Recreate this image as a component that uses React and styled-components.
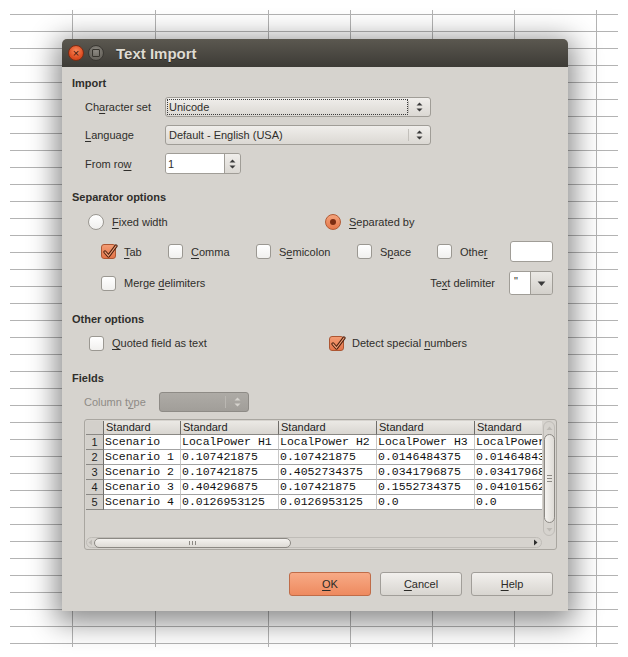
import React from "react";
import styled, { createGlobalStyle } from "styled-components";

const GRID = "#b3b3b3";
const columnLines = [72, 155, 268, 350, 432, 514, 596];

const GlobalStyle = createGlobalStyle`
  html, body {
    margin: 0;
    padding: 0;
    background: #fff;
  }
  body {
    font-family: "Liberation Sans", Arial, sans-serif;
    font-size: 11px;
    color: #2f2e2b;
  }
`;

const Page = styled.div`
  position: relative;
  width: 628px;
  height: 657px;
  box-sizing: border-box;
  padding: 39px 0 0 62px;
  overflow: hidden;
  background-color: #fff;
  background-image: ${columnLines.map(() => `linear-gradient(${GRID}, ${GRID})`).join(", ")},
    repeating-linear-gradient(to bottom, ${GRID} 0 1px, transparent 1px 17px);
  background-size: ${columnLines.map(() => "1px 637px").join(", ")}, 608px 630px;
  background-position: ${columnLines.map((x) => `${x}px 10px`).join(", ")}, 10px 14px;
  background-repeat: no-repeat;
`;

const Dialog = styled.div`
  position: relative;
  width: 506px;
  background: #d6d3ce;
  border-radius: 5px 5px 0 0;
  box-shadow: 0 6px 28px 6px rgba(0, 0, 0, 0.45);
`;

const TitleBar = styled.div`
  height: 28px;
  display: flex;
  align-items: center;
  padding-left: 6px;
  background: linear-gradient(#5b5850, #3d3b36);
  border-radius: 5px 5px 0 0;
`;

const WinButton = styled.span`
  width: 16px;
  height: 16px;
  box-sizing: border-box;
  border-radius: 50%;
  margin-right: 4px;
  display: flex;
  align-items: center;
  justify-content: center;
  border: 1px solid ${(p) => (p.$close ? "#7d2c14" : "#3a3833")};
  background: ${(p) =>
    p.$close
      ? "radial-gradient(circle at 50% 35%, #f78a5e, #df4f23 60%, #c23f19)"
      : "radial-gradient(circle at 50% 35%, #8d8a83, #6c6962 60%, #5d5a54)"};
  color: #3b1408;
  font-size: 11px;
  line-height: 1;
`;

const MaxSquare = styled.span`
  width: 6px;
  height: 6px;
  border: 1px solid #37352f;
  border-radius: 1px;
`;

const Title = styled.span`
  margin-left: 8px;
  font-weight: bold;
  font-size: 15px;
  color: #dfdbd2;
  text-shadow: 0 1px 0 rgba(0, 0, 0, 0.4);
`;

const Body = styled.div`
  display: flex;
  flex-direction: column;
  padding: 8px 15px 15px 10px;
`;

const Heading = styled.div`
  font-weight: bold;
  line-height: 16px;
  height: 16px;
  margin-top: ${(p) => p.$gap || 0}px;
`;

const U = styled.span`
  text-decoration: underline;
  text-underline-offset: 2px;
`;

const FormGrid = styled.div`
  display: grid;
  grid-template-columns: 80px auto;
  grid-template-rows: 20px 20px 21px;
  row-gap: 8px;
  align-items: center;
  justify-items: start;
  margin: 6px 0 0 13px;
`;

const Combo = styled.div`
  display: flex;
  align-items: stretch;
  width: ${(p) => p.$w}px;
  height: ${(p) => p.$h || 20}px;
  box-sizing: border-box;
  border: 1px solid ${(p) => (p.$disabled ? "#8e8b86" : "#a09d97")};
  border-radius: 3px;
  background: ${(p) =>
    p.$disabled ? "linear-gradient(#aeaba6, #a19e99)" : "linear-gradient(#f0eeeb, #dbd8d3)"};
  overflow: hidden;
`;

const ComboText = styled.div`
  flex: 1;
  display: flex;
  align-items: center;
  padding-left: 2px;
  margin: 1px 0 1px 1px;
  outline: ${(p) => (p.$focus ? "1px dotted #3a3a3a" : "none")};
  outline-offset: -1px;
  white-space: nowrap;
`;

const ComboArrows = styled.div`
  width: ${(p) => p.$w || 20}px;
  display: flex;
  align-items: center;
  justify-content: center;
  border-left: 1px solid ${(p) => (p.$disabled ? "#bab7b2" : "#c3c0bb")};
  margin: 3px 0;
`;

const Spin = styled.div`
  display: flex;
  width: 76px;
  height: 21px;
  box-sizing: border-box;
  border: 1px solid #a09d97;
  border-radius: 3px;
  overflow: hidden;
`;

const SpinInput = styled.div`
  flex: 1;
  background: #fff;
  display: flex;
  align-items: center;
  padding-left: 2px;
`;

const SpinButton = styled.div`
  width: 15px;
  display: flex;
  align-items: center;
  justify-content: center;
  border-left: 1px solid #a09d97;
  background: linear-gradient(#f0eeeb, #dbd8d3);
`;

const RadioRow = styled.div`
  display: grid;
  grid-template-columns: 237px auto;
  height: 16px;
  margin: 9px 0 0 16px;
`;

const Option = styled.label`
  display: inline-flex;
  align-items: center;
  gap: 8px;
  white-space: nowrap;
`;

const RadioDot = styled.span`
  width: 16px;
  height: 16px;
  box-sizing: border-box;
  border-radius: 50%;
  flex: none;
  display: flex;
  align-items: center;
  justify-content: center;
  border: 1px solid ${(p) => (p.$on ? "#b35a34" : "#9b9892")};
  background: ${(p) =>
    p.$on ? "linear-gradient(#f4a37c, #e5784b)" : "linear-gradient(#ffffff, #f0efed)"};
  &::after {
    content: "";
    display: ${(p) => (p.$on ? "block" : "none")};
    width: 6px;
    height: 6px;
    border-radius: 50%;
    background: #7c2d12;
  }
`;

const Box = styled.span`
  position: relative;
  width: 15px;
  height: 15px;
  box-sizing: border-box;
  flex: none;
  border: 1px solid ${(p) => (p.$on ? "#ad5632" : "#9b9892")};
  border-radius: 3px;
  background: ${(p) =>
    p.$on ? "linear-gradient(#f39c74, #e4754a)" : "linear-gradient(#ffffff, #f1f0ee)"};
`;

const Tick = styled.svg`
  position: absolute;
  left: 0;
  top: -2px;
`;

const CheckRow = styled.div`
  display: grid;
  grid-template-columns: 67px 88px 101px 80px 73px 43px;
  align-items: center;
  height: 21px;
  margin: 11px 0 0 29px;
`;

const TextField = styled.div`
  width: 43px;
  height: 21px;
  box-sizing: border-box;
  border: 1px solid #a09d97;
  border-radius: 3px;
  background: #fff;
`;

const MergeRow = styled.div`
  display: flex;
  align-items: center;
  height: 24px;
  margin: 9px 0 0 29px;
`;

const Delimiter = styled.div`
  margin-left: auto;
  display: flex;
  align-items: center;
  gap: 14px;
`;

const DelimCombo = styled.div`
  display: flex;
  width: 44px;
  height: 24px;
  box-sizing: border-box;
  border: 1px solid #a09d97;
  border-radius: 3px;
  overflow: hidden;
`;

const DelimText = styled.div`
  flex: 1;
  background: #fff;
  padding: 3px 0 0 4px;
  font-size: 11px;
`;

const DelimButton = styled.div`
  width: 21px;
  display: flex;
  align-items: center;
  justify-content: center;
  border-left: 1px solid #a09d97;
  background: linear-gradient(#ebe9e5, #d3d0cb);
`;

const OtherRow = styled.div`
  display: grid;
  grid-template-columns: 240px auto;
  height: 16px;
  align-items: center;
  margin: 8px 0 0 17px;
`;

const TypeRow = styled.div`
  display: flex;
  align-items: center;
  height: 20px;
  margin: 6px 0 0 12px;
`;

const Dim = styled.span`
  width: 75px;
  color: #8e8b86;
`;

const Frame = styled.div`
  display: grid;
  grid-template-columns: 456px 13px;
  grid-template-rows: 115px 12px;
  width: 473px;
  height: 131px;
  box-sizing: border-box;
  padding: 1px;
  margin: 7px 0 0 12px;
  border: 1px solid #a9a6a0;
  border-radius: 3px;
  background: #d6d3ce;
`;

const Viewport = styled.div`
  overflow: hidden;
`;

const Sheet = styled.div`
  display: grid;
  grid-template-columns: 18px 77px 98px 98px 98px 98px;
  grid-template-rows: 14px repeat(5, 15px);
`;

const HeadCell = styled.div`
  box-sizing: border-box;
  padding-left: 2px;
  line-height: 13px;
  white-space: nowrap;
  overflow: hidden;
  color: #1e1e1e;
  background: linear-gradient(#ebe9e5, #d9d6d1);
  border-right: 1px solid #6f6d69;
  border-bottom: 1px solid #8a8884;
`;

const RowHead = styled.div`
  box-sizing: border-box;
  text-align: center;
  line-height: 14px;
  color: #1e1e1e;
  background: #d3d0cb;
  border-right: 1px solid #6f6d69;
  border-bottom: 1px solid #8a8884;
`;

const Cell = styled.div`
  box-sizing: border-box;
  padding-left: 1px;
  background: #fff;
  font-family: "Liberation Mono", "Courier New", monospace;
  font-size: 11.5px;
  line-height: 14px;
  white-space: pre;
  overflow: hidden;
  color: #111;
  border-right: 1px solid #c8c8c8;
  border-bottom: 1px solid #a3a3a3;
`;

const VScroll = styled.div`
  display: flex;
  flex-direction: column;
  align-items: center;
  box-sizing: border-box;
  border: 1px solid #bfbcb7;
  border-radius: 6px;
  margin-left: 1px;
`;

const ScrollArrow = styled.div`
  height: ${(p) => p.$h}px;
  margin-left: ${(p) => (p.$end ? "auto" : "0")};
  padding-right: ${(p) => (p.$end ? "2px" : "0")};
  display: flex;
  align-items: center;
  justify-content: center;
  flex: none;
`;

const VThumb = styled.div`
  flex: 1;
  width: 11px;
  box-sizing: border-box;
  border: 1px solid #8c8984;
  border-radius: 6px;
  background: linear-gradient(to right, #f4f2ef, #dedbd6);
  display: flex;
  align-items: center;
  justify-content: center;
`;

const HScroll = styled.div`
  display: flex;
  align-items: center;
  box-sizing: border-box;
  border: 1px solid #bfbcb7;
  border-radius: 6px;
  margin-top: 1px;
`;

const HThumb = styled.div`
  width: 197px;
  height: 10px;
  box-sizing: border-box;
  border: 1px solid #8c8984;
  border-radius: 6px;
  background: linear-gradient(#f4f2ef, #dedbd6);
  display: flex;
  align-items: center;
  justify-content: center;
  gap: 2px;
`;

const Grip = styled.span`
  width: ${(p) => (p.$v ? 5 : 1)}px;
  height: ${(p) => (p.$v ? 1 : 4)}px;
  background: #8c8984;
`;

const GripCol = styled.div`
  display: flex;
  flex-direction: column;
  gap: 2px;
`;

const ButtonRow = styled.div`
  display: flex;
  justify-content: flex-end;
  gap: 9px;
  margin-top: 22px;
`;

const Button = styled.button`
  width: 82px;
  height: 24px;
  box-sizing: border-box;
  padding: 0;
  font-family: "Liberation Sans", Arial, sans-serif;
  font-size: 11px;
  color: #2b2a27;
  border-radius: 3px;
  border: 1px solid ${(p) => (p.$primary ? "#c06c48" : "#a19e99")};
  background: ${(p) =>
    p.$primary ? "linear-gradient(#f7aa86, #ee8a5f)" : "linear-gradient(#f2f0ed, #d8d5d0)"};
`;

const UpDown = ({ color = "#3a3a3a" }) => (
  <svg width="7" height="12" viewBox="0 0 7 12">
    <path d="M3.5 1.5 L6.5 4.5 H0.5 Z M3.5 10.5 L6.5 7.5 H0.5 Z" fill={color} />
  </svg>
);

const Triangle = ({ dir, color = "#3a3a3a", size = 7 }) => {
  const d = {
    down: "M0.5 2 H6.5 L3.5 5.5 Z",
    up: "M0.5 5 H6.5 L3.5 1.5 Z",
    left: "M5 0.5 V6.5 L1.5 3.5 Z",
    right: "M2 0.5 V6.5 L5.5 3.5 Z",
  }[dir];
  return (
    <svg width={size} height={size} viewBox="0 0 7 7">
      <path d={d} fill={color} />
    </svg>
  );
};

const Check = ({ on, children }) => (
  <Option>
    <Box $on={on}>
      {on && (
        <Tick width="16" height="17" viewBox="0 0 16 17">
          <path d="M3 9 L6.5 13 L14 3" stroke="#4a1f0d" strokeWidth="3.2" fill="none" strokeLinejoin="round" strokeLinecap="round" />
          <path d="M3 9 L6.5 13 L14 3" stroke="#f2a07a" strokeWidth="1.2" fill="none" strokeLinejoin="round" strokeLinecap="round" />
        </Tick>
      )}
    </Box>
    <span>{children}</span>
  </Option>
);

const Radio = ({ on, children }) => (
  <Option>
    <RadioDot $on={on} />
    <span>{children}</span>
  </Option>
);

const headers = ["Standard", "Standard", "Standard", "Standard", "Standard"];
const rows = [
  ["Scenario", "LocalPower H1", "LocalPower H2", "LocalPower H3", "LocalPower H4"],
  ["Scenario 1", "0.107421875", "0.107421875", "0.0146484375", "0.0146484375"],
  ["Scenario 2", "0.107421875", "0.4052734375", "0.0341796875", "0.0341796875"],
  ["Scenario 3", "0.404296875", "0.107421875", "0.1552734375", "0.0410156250"],
  ["Scenario 4", "0.0126953125", "0.0126953125", "0.0", "0.0"],
];

export default function App() {
  return (
    <Page>
      <GlobalStyle />
      <Dialog>
        <TitleBar>
          <WinButton $close>×</WinButton>
          <WinButton>
            <MaxSquare />
          </WinButton>
          <Title>Text Import</Title>
        </TitleBar>
        <Body>
          <Heading>Import</Heading>
          <FormGrid>
            <span>
              Ch<U>a</U>racter set
            </span>
            <Combo $w={266}>
              <ComboText $focus>Unicode</ComboText>
              <ComboArrows $w={21}>
                <UpDown />
              </ComboArrows>
            </Combo>
            <span>
              <U>L</U>anguage
            </span>
            <Combo $w={266}>
              <ComboText>Default - English (USA)</ComboText>
              <ComboArrows $w={21}>
                <UpDown />
              </ComboArrows>
            </Combo>
            <span>
              From ro<U>w</U>
            </span>
            <Spin>
              <SpinInput>1</SpinInput>
              <SpinButton>
                <UpDown />
              </SpinButton>
            </Spin>
          </FormGrid>

          <Heading $gap={15}>Separator options</Heading>
          <RadioRow>
            <Radio>
              <U>F</U>ixed width
            </Radio>
            <Radio on>
              <U>S</U>eparated by
            </Radio>
          </RadioRow>
          <CheckRow>
            <Check on>
              <U>T</U>ab
            </Check>
            <Check>
              <U>C</U>omma
            </Check>
            <Check>
              S<U>e</U>micolon
            </Check>
            <Check>
              S<U>p</U>ace
            </Check>
            <Check>
              Othe<U>r</U>
            </Check>
            <TextField />
          </CheckRow>
          <MergeRow>
            <Check>
              Merge <U>d</U>elimiters
            </Check>
            <Delimiter>
              <span>
                Te<U>x</U>t delimiter
              </span>
              <DelimCombo>
                <DelimText>"</DelimText>
                <DelimButton>
                  <Triangle dir="down" size={9} />
                </DelimButton>
              </DelimCombo>
            </Delimiter>
          </MergeRow>

          <Heading $gap={16}>Other options</Heading>
          <OtherRow>
            <Check>
              <U>Q</U>uoted field as text
            </Check>
            <Check on>
              Detect special <U>n</U>umbers
            </Check>
          </OtherRow>

          <Heading $gap={19}>Fields</Heading>
          <TypeRow>
            <Dim>
              Column t<U>y</U>pe
            </Dim>
            <Combo $w={90} $disabled>
              <ComboText />
              <ComboArrows $w={22} $disabled>
                <UpDown color="#d6d3ce" />
              </ComboArrows>
            </Combo>
          </TypeRow>

          <Frame>
            <Viewport>
              <Sheet>
                <RowHead />
                {headers.map((h, i) => (
                  <HeadCell key={i}>{h}</HeadCell>
                ))}
                {rows.map((r, i) => (
                  <React.Fragment key={i}>
                    <RowHead>{i + 1}</RowHead>
                    {r.map((c, j) => (
                      <Cell key={j}>{c}</Cell>
                    ))}
                  </React.Fragment>
                ))}
              </Sheet>
            </Viewport>
            <VScroll>
              <ScrollArrow $h={12}>
                <Triangle dir="up" color="#bdbab5" />
              </ScrollArrow>
              <VThumb>
                <GripCol>
                  <Grip $v />
                  <Grip $v />
                  <Grip $v />
                </GripCol>
              </VThumb>
              <ScrollArrow $h={12}>
                <Triangle dir="down" color="#bdbab5" />
              </ScrollArrow>
            </VScroll>
            <HScroll>
              <ScrollArrow $h={10}>
                <Triangle dir="left" color="#bdbab5" />
              </ScrollArrow>
              <HThumb>
                <Grip />
                <Grip />
                <Grip />
              </HThumb>
              <ScrollArrow $h={10} $end>
                <Triangle dir="right" color="#2e2e2e" />
              </ScrollArrow>
            </HScroll>
            <div />
          </Frame>

          <ButtonRow>
            <Button $primary>
              <U>O</U>K
            </Button>
            <Button>
              <U>C</U>ancel
            </Button>
            <Button>
              <U>H</U>elp
            </Button>
          </ButtonRow>
        </Body>
      </Dialog>
    </Page>
  );
}
